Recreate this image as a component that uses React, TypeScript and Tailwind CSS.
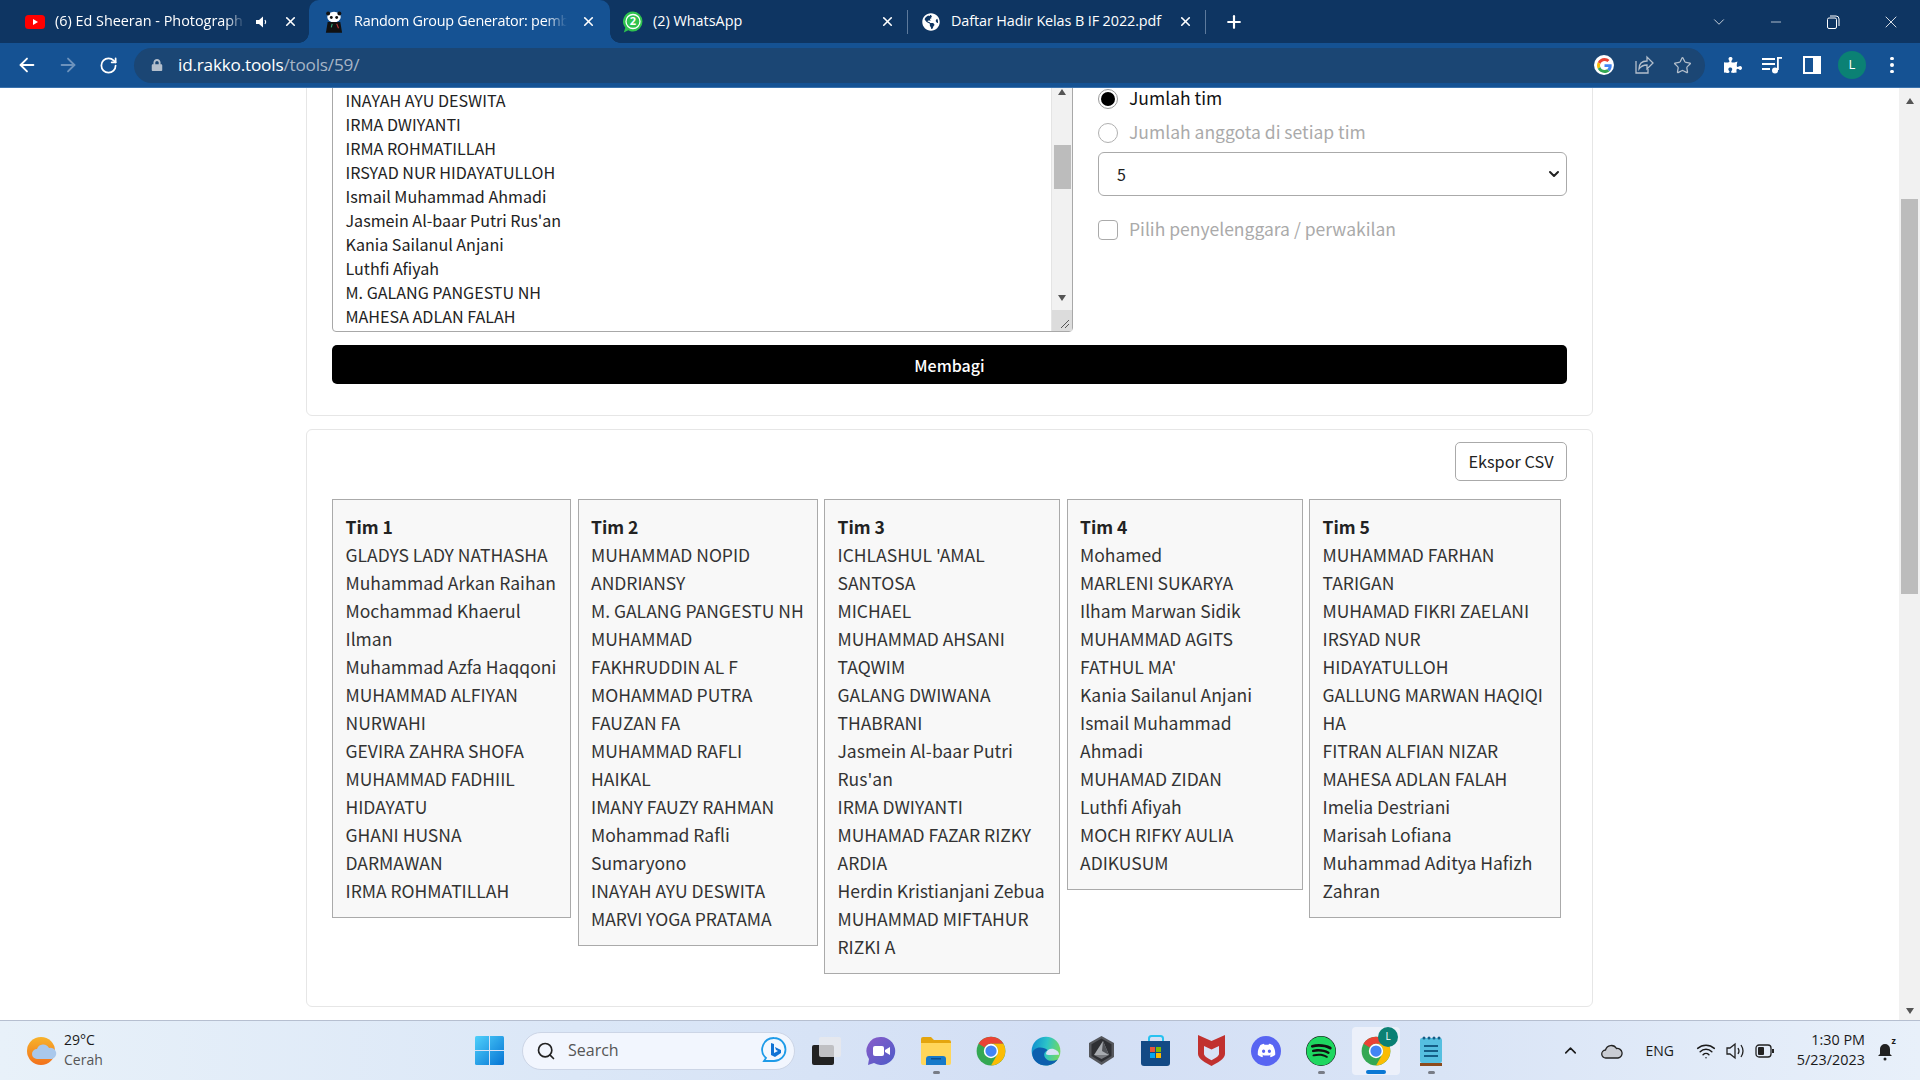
import React from "react";
import { ArrowLeft, ArrowRight, RotateCw, X, Plus, ChevronDown, Minus, Star, Search, ChevronUp, Wifi } from "lucide-react";
import { FaGlobeAmericas, FaPuzzlePiece, FaLock, FaDiscord, FaSpotify } from "react-icons/fa";

const listLines = ["INAYAH AYU DESWITA","IRMA DWIYANTI","IRMA ROHMATILLAH","IRSYAD NUR HIDAYATULLOH","Ismail Muhammad Ahmadi","Jasmein Al-baar Putri Rus'an","Kania Sailanul Anjani","Luthfi Afiyah","M. GALANG PANGESTU NH","MAHESA ADLAN FALAH"];

const teams = [
  { name: "Tim 1", cls: "w-[239px]", members: ["GLADYS LADY NATHASHA","Muhammad Arkan Raihan","Mochammad Khaerul\nIlman","Muhammad Azfa Haqqoni","MUHAMMAD ALFIYAN\nNURWAHI","GEVIRA ZAHRA SHOFA","MUHAMMAD FADHIIL\nHIDAYATU","GHANI HUSNA\nDARMAWAN","IRMA ROHMATILLAH"] },
  { name: "Tim 2", cls: "w-[240px]", members: ["MUHAMMAD NOPID\nANDRIANSY","M. GALANG PANGESTU NH","MUHAMMAD\nFAKHRUDDIN AL F","MOHAMMAD PUTRA\nFAUZAN FA","MUHAMMAD RAFLI\nHAIKAL","IMANY FAUZY RAHMAN","Mohammad Rafli\nSumaryono","INAYAH AYU DESWITA","MARVI YOGA PRATAMA"] },
  { name: "Tim 3", cls: "w-[236px]", members: ["ICHLASHUL 'AMAL\nSANTOSA","MICHAEL","MUHAMMAD AHSANI\nTAQWIM","GALANG DWIWANA\nTHABRANI","Jasmein Al-baar Putri\nRus'an","IRMA DWIYANTI","MUHAMAD FAZAR RIZKY\nARDIA","Herdin Kristianjani Zebua","MUHAMMAD MIFTAHUR\nRIZKI A"] },
  { name: "Tim 4", cls: "w-[236px]", members: ["Mohamed","MARLENI SUKARYA","Ilham Marwan Sidik","MUHAMMAD AGITS\nFATHUL MA'","Kania Sailanul Anjani","Ismail Muhammad\nAhmadi","MUHAMAD ZIDAN","Luthfi Afiyah","MOCH RIFKY AULIA\nADIKUSUM"] },
  { name: "Tim 5", cls: "w-[252px]", members: ["MUHAMMAD FARHAN\nTARIGAN","MUHAMAD FIKRI ZAELANI","IRSYAD NUR\nHIDAYATULLOH","GALLUNG MARWAN HAQIQI\nHA","FITRAN ALFIAN NIZAR","MAHESA ADLAN FALAH","Imelia Destriani","Marisah Lofiana","Muhammad Aditya Hafizh\nZahran"] },
];

function GoogleG({ size = 14 }: { size?: number }) {
  return (
    <svg width={size} height={size} viewBox="0 0 48 48">
      <path fill="#EA4335" d="M24 9.5c3.54 0 6.71 1.22 9.21 3.6l6.85-6.85C35.9 2.38 30.47 0 24 0 14.62 0 6.51 5.38 2.56 13.22l7.98 6.19C12.43 13.72 17.74 9.5 24 9.5z" />
      <path fill="#4285F4" d="M46.98 24.55c0-1.57-.15-3.09-.38-4.55H24v9.02h12.94c-.58 2.96-2.26 5.48-4.78 7.18l7.73 6c4.51-4.18 7.09-10.36 7.09-17.65z" />
      <path fill="#FBBC05" d="M10.53 28.59c-.48-1.45-.76-2.99-.76-4.59s.27-3.14.76-4.59l-7.98-6.19C.92 16.46 0 20.12 0 24c0 3.88.92 7.54 2.56 10.78l7.97-6.19z" />
      <path fill="#34A853" d="M24 48c6.48 0 11.93-2.13 15.89-5.81l-7.73-6c-2.15 1.45-4.92 2.3-8.16 2.3-6.26 0-11.57-4.22-13.47-9.91l-7.98 6.19C6.51 42.62 14.62 48 24 48z" />
    </svg>
  );
}

function ChromeIcon({ size = 30 }: { size?: number }) {
  return (
    <svg width={size} height={size} viewBox="0 0 48 48">
      <circle cx="24" cy="24" r="23" fill="#34a853" />
      <path fill="#ea4335" d="M4.1 12.5A23 23 0 0 1 43.9 12.5L24 12.5A11.5 11.5 0 0 0 14 18.2Z" />
      <path fill="#fbbc04" d="M43.9 12.5A23 23 0 0 1 24 47L34 29.7A11.5 11.5 0 0 0 24 12.5Z" />
      <circle cx="24" cy="24" r="11.5" fill="#fff" />
      <circle cx="24" cy="24" r="9" fill="#4285f4" />
    </svg>
  );
}

function EdgeIcon() {
  return (
    <svg width="30" height="30" viewBox="0 0 48 48">
      <defs>
        <linearGradient id="edgeA" x1="0" y1="0.3" x2="1" y2="0.5">
          <stop offset="0" stopColor="#0f8fd0" />
          <stop offset="0.5" stopColor="#2cc4c8" />
          <stop offset="1" stopColor="#74d95e" />
        </linearGradient>
      </defs>
      <circle cx="24" cy="24" r="23" fill="url(#edgeA)" />
      <path fill="#0c5fae" d="M2 27C2 40 13 47 24 47C32 47 39 43 43 37C36 41 27 41 23 35C19 29 22 24 27 23C20 17 6 16 2 27Z" />
      <path fill="#d8e2f6" d="M24 28C25 22 31 19 37 21C43 23 45 27 45 30L31 30.500C27 30.500 24 30.500 24 28Z" />
    </svg>
  );
}

function HexIcon() {
  return (
    <svg width="27" height="29" viewBox="0 0 27 29">
      <polygon points="13.5,0 26,7 26,21 13.5,29 1,21 1,7" fill="#55575c" />
      <polygon points="13.5,2.500 23.500,8.200 23.500,20 13.5,26 3.500,20 3.500,8.200" fill="#2e2f33" />
      <polygon points="15,5 21,19 6,19" fill="#a8abb0" />
      <polygon points="15,5 21,19 14,15" fill="#505257" />
      <polygon points="6,19 21,19 13.500,23" fill="#77797e" />
    </svg>
  );
}

function StoreIcon() {
  return (
    <svg width="30" height="32" viewBox="0 0 30 32">
      <path d="M8 6V3.500C8 2 9 1 10.500 1h9C21 1 22 2 22 3.500V6" fill="none" stroke="#28c2f0" strokeWidth="2" />
      <path d="M0 6h29v22a3 3 0 0 1-3 3H3a3 3 0 0 1-3-3z" fill="#134a85" />
      <rect x="9" y="12" width="5" height="5" fill="#e8553a" />
      <rect x="15" y="12" width="5" height="5" fill="#7fba00" />
      <rect x="9" y="18" width="5" height="5" fill="#05a6f0" />
      <rect x="15" y="18" width="5" height="5" fill="#ffb900" />
    </svg>
  );
}

function McAfee() {
  return (
    <svg width="27" height="31" viewBox="0 0 27 31">
      <path fill="#c1312f" d="M0 0l13.500 6L27 0v19c0 5-8 9-13.500 12C8 28 0 24 0 19z" />
      <path fill="#d8e2f6" d="M6 11l7.500 3.400L21 11v8c0 2-4 4.500-7.500 6.200C10 23.500 6 21 6 19z" />
    </svg>
  );
}

function TeamsIcon() {
  return (
    <svg width="30" height="30" viewBox="0 0 30 30">
      <defs>
        <linearGradient id="teamA" x1="0" y1="0" x2="1" y2="1">
          <stop offset="0" stopColor="#8a5cc9" />
          <stop offset="1" stopColor="#4c5bc8" />
        </linearGradient>
      </defs>
      <path fill="url(#teamA)" d="M15 1a14 14 0 1 1-7 26l-6 2 1-6A14 14 0 0 1 15 1z" />
      <rect x="7" y="10" width="11" height="10" rx="2" fill="#fff" />
      <path d="M19 14l5-3v8l-5-3z" fill="#fff" />
    </svg>
  );
}

function Explorer() {
  return (
    <svg width="30" height="28" viewBox="0 0 30 28">
      <path fill="#e4a50e" d="M0 2a2 2 0 0 1 2-2h8l3 3h15a2 2 0 0 1 2 2v6H0z" />
      <path fill="#ffd65a" d="M0 6h30v20a2 2 0 0 1-2 2H2a2 2 0 0 1-2-2z" />
      <path fill="#1679c9" d="M5 28v-6a3 3 0 0 1 3-3h14a3 3 0 0 1 3 3v6z" />
      <rect x="10" y="21" width="10" height="1.500" fill="#0b4f8f" />
    </svg>
  );
}

function Notepad() {
  return (
    <svg width="22" height="30" viewBox="0 0 22 30">
      <rect x="0" y="2" width="22" height="25" rx="2" fill="#55bfe0" />
      <rect x="0" y="27" width="22" height="3" fill="#8c4a1c" />
      <g fill="#145e86">
        <circle cx="4" cy="2" r="1.500" /><circle cx="9" cy="2" r="1.500" /><circle cx="14" cy="2" r="1.500" /><circle cx="19" cy="2" r="1.500" />
        <rect x="4" y="9" width="14" height="2" /><rect x="4" y="14" width="14" height="2" /><rect x="4" y="19" width="14" height="2" />
      </g>
    </svg>
  );
}

function Windows() {
  return (
    <svg width="29" height="29" viewBox="0 0 29 29">
      <defs>
        <linearGradient id="winA" x1="0" y1="0" x2="1" y2="1">
          <stop offset="0" stopColor="#4fd0fb" />
          <stop offset="1" stopColor="#0574d4" />
        </linearGradient>
      </defs>
      <rect width="29" height="29" rx="1.500" fill="url(#winA)" />
      <rect x="14" width="1" height="29" fill="#d8e2f6" />
      <rect y="14" width="29" height="1" fill="#d8e2f6" />
    </svg>
  );
}

function Bing() {
  return (
    <svg width="26" height="30" viewBox="0 0 26 30">
      <path d="M13 2a11.500 11.500 0 0 1 0 23H3l2-3A11.500 11.500 0 0 1 13 2z" fill="#f4f8fe" stroke="#1e9be8" strokeWidth="1.800" />
      <path d="M10 7l3 1v9l4-2-2-1-1-3 6 3v3l-6 4-4-2z" fill="#1173d4" />
    </svg>
  );
}

function Weather() {
  return (
    <svg width="30" height="28" viewBox="0 0 30 28">
      <defs>
        <linearGradient id="sunA" x1="0" y1="0" x2="0" y2="1">
          <stop offset="0" stopColor="#f7b32b" />
          <stop offset="1" stopColor="#f2711c" />
        </linearGradient>
      </defs>
      <circle cx="14" cy="14" r="14" fill="url(#sunA)" />
      <path d="M10 22a5 5 0 0 1 0-10 6.500 6.500 0 0 1 12-1 5.600 5.600 0 0 1 3 11z" fill="#a9c8ec" />
    </svg>
  );
}

function Panda() {
  return (
    <svg width="18" height="24" viewBox="0 0 20 24">
      <ellipse cx="10" cy="6.500" rx="7.500" ry="6" fill="#fff" />
      <circle cx="3.500" cy="2.500" r="2.200" fill="#111" />
      <circle cx="16" cy="2.500" r="2.200" fill="#111" />
      <circle cx="7" cy="7" r="1.600" fill="#111" />
      <circle cx="13" cy="7" r="1.600" fill="#111" />
      <path d="M3 12h14l2 12H1z" fill="#111" />
      <path d="M13 14l2 5" stroke="#b33" strokeWidth="1.200" />
      <path d="M8 14l-1 4" stroke="#3a7" strokeWidth="1.200" />
    </svg>
  );
}

function YouTube() {
  return (
    <svg width="20" height="14" viewBox="0 0 20 14">
      <rect width="20" height="14" rx="3.500" fill="#f00" />
      <path d="M8 4l5 3-5 3z" fill="#fff" />
    </svg>
  );
}

function Speaker({ cls }: { cls?: string }) {
  return (
    <svg width="14" height="14" viewBox="0 0 14 14" className={cls}>
      <path d="M1 5h3l4-3.500v11L4 9H1z" fill="#fff" />
      <path d="M10 5q1.500 2 0 4" stroke="#fff" strokeWidth="1.200" fill="none" />
    </svg>
  );
}

function Tab({ icon, title, extra, cls, active, fade, tcls }: { icon: React.ReactNode; title: string; extra?: React.ReactNode; cls: string; active?: boolean; fade?: boolean; tcls?: string }) {
  return (
    <div className={`relative flex h-[43px] items-center shrink-0 ${cls} ${active ? "bg-[#155293] rounded-t-[10px]" : ""}`}>
      {active && <div className="absolute bottom-0 -left-[10px] h-[10px] w-[10px] bg-[radial-gradient(circle_at_0_0,transparent_9.5px,#155293_10px)]" />}
      {active && <div className="absolute bottom-0 -right-[10px] h-[10px] w-[10px] bg-[radial-gradient(circle_at_100%_0,transparent_9.5px,#155293_10px)]" />}
      {icon}
      <span className={`min-w-0 flex-1 overflow-hidden whitespace-nowrap pb-[2px] text-[14.400px] text-white ${tcls ?? ""} ${fade ? "[mask-image:linear-gradient(90deg,#000_90%,transparent)]" : ""}`}>{title}</span>
      {extra}
      <X size={15} strokeWidth={2.6} className="ml-[14px] shrink-0 text-white" />
    </div>
  );
}

function TaskCell({ children, dot, active }: { children: React.ReactNode; dot?: boolean; active?: boolean }) {
  return (
    <div className="relative flex h-[60px] w-[55px] shrink-0 items-center justify-center">
      {active && <div className="absolute left-[3.500px] top-[6px] h-[48px] w-[48px] rounded-[4px] bg-[#ecf0fa]" />}
      <div className="relative flex items-center justify-center">{children}</div>
      {dot && <div className="absolute bottom-[7px] left-[24px] h-[3px] w-[7px] rounded-full bg-[#787c86]" />}
      {active && <div className="absolute bottom-[7px] left-[17px] h-[3.500px] w-[20px] rounded-full bg-[#0a78d4]" />}
    </div>
  );
}

export default function App() {
  return (
    <div className="flex h-[1080px] w-[1920px] flex-col overflow-hidden bg-white font-['Noto_Sans_CJK_JP',sans-serif] text-[#333]">
      {/* Tab strip */}
      <div className="flex h-[43px] shrink-0 items-center bg-[#0e3562] font-['Open_Sans',sans-serif]">
        <Tab cls="w-[309px] pl-[25px] pr-[11px]" fade icon={<span className="mr-[10px] flex"><YouTube /></span>} title="(6) Ed Sheeran - Photograph" extra={<Speaker cls="ml-[10px] shrink-0" />} />
        <Tab cls="w-[301px] pl-[16px] pr-[14px]" active fade tcls="tracking-[-0.25px]" icon={<span className="mr-[11px] flex"><Panda /></span>} title="Random Group Generator: pemb" />
        <Tab cls="w-[297px] pl-[13px] pr-[12px]" icon={<span className="relative mr-[10px] flex h-[24px] w-[20px] items-center justify-center"><svg width="20" height="24" viewBox="0 0 20 24"><path d="M10 1.500a9.500 10 0 0 1 0 20c-1.800 0-3.300-.5-4.700-1.300L.8 22.500l1.500-4.700A10 10 0 0 1 10 1.500z" fill="#2fc24f" /><circle cx="10" cy="11.500" r="7" fill="none" stroke="#fff" strokeWidth="1.300" /></svg><span className="absolute pb-[2px] text-[11px] font-bold leading-none text-white">2</span></span>} title="(2) WhatsApp" />
        <div className="h-[24px] w-px shrink-0 bg-[#5d7a9c]" />
        <Tab cls="w-[297px] pl-[14px] pr-[12px]" tcls="tracking-[-0.1px]" icon={<span className="mr-[11px] flex"><FaGlobeAmericas size={18} className="text-white" /></span>} title="Daftar Hadir Kelas B IF 2022.pdf" />
        <div className="h-[24px] w-px shrink-0 bg-[#5d7a9c]" />
        <Plus size={20} strokeWidth={2.6} className="ml-[18px] text-white" />
        <div className="ml-auto flex items-center text-white">
          <ChevronDown size={18} strokeWidth={1} className="mr-[40px]" />
          <Minus size={16} strokeWidth={1} className="mr-[42px]" />
          <svg width="14" height="14" viewBox="0 0 14 14" className="mr-[41px]"><rect x="1.500" y="3" width="9" height="10.500" rx="1.500" fill="none" stroke="#fff" /><path d="M4 1h6a3 3 0 0 1 3 3v7" fill="none" stroke="#fff" /></svg>
          <X size={20} strokeWidth={1} className="mr-[19px]" />
        </div>
      </div>
      {/* Toolbar */}
      <div className="flex h-[45px] shrink-0 items-center border-b border-[#3a72ad] bg-[#155293] font-['Open_Sans',sans-serif]">
        <ArrowLeft size={22} strokeWidth={2} className="ml-[16px] text-white" />
        <ArrowRight size={22} strokeWidth={2} className="ml-[19px] text-[#6d93bd]" />
        <RotateCw size={19} strokeWidth={2.2} className="ml-[20px] text-white" />
        <div className="ml-[16px] flex h-[35px] w-[1571px] items-center rounded-full bg-[#1b4674] pl-[17px]">
          <FaLock size={12} className="text-[#b4bfcc]" />
          <span className="ml-[15px] text-[17.200px] tracking-[-0.2px] text-white">id.rakko.tools<span className="text-[#a7b5c6]">/tools/59/</span></span>
          <div className="ml-auto flex items-center">
            <span className="flex h-[20px] w-[20px] items-center justify-center rounded-full bg-white"><GoogleG size={15} /></span>
            <svg width="20" height="20" viewBox="0 0 20 20" className="ml-[20px]" fill="none" stroke="#b4bfcc" strokeWidth="1.300"><path d="M2 6v12h12v-4" /><path d="M5 14c0-5 3-8 8-8V2l6 6-6 6v-4c-4 0-6 1-8 4z" /></svg>
            <Star size={19} strokeWidth={1.600} className="ml-[19px] mr-[13px] text-[#b4bfcc]" />
          </div>
        </div>
        <FaPuzzlePiece size={18} className="ml-[19px] text-white" />
        <svg width="20" height="18" viewBox="0 0 20 18" className="ml-[20px]" fill="#fff"><rect x="0" y="2" width="13" height="2" /><rect x="0" y="7" width="13" height="2" /><rect x="0" y="12" width="8" height="2" /><circle cx="13" cy="14.500" r="3" /><rect x="15" y="1" width="1.800" height="13" /><rect x="15" y="1" width="5" height="1.800" /></svg>
        <svg width="18" height="18" viewBox="0 0 18 18" className="ml-[21px]"><rect x="1" y="1" width="16" height="16" fill="none" stroke="#fff" strokeWidth="2" /><rect x="10" y="1" width="7" height="16" fill="#fff" /></svg>
        <div className="ml-[17px] flex h-[28px] w-[28px] items-center justify-center rounded-full bg-[#0b8174] text-[13px] text-white">L</div>
        <div className="ml-[24px] flex flex-col gap-[3px]">
          <span className="h-[3.500px] w-[3.500px] rounded-full bg-white" />
          <span className="h-[3.500px] w-[3.500px] rounded-full bg-white" />
          <span className="h-[3.500px] w-[3.500px] rounded-full bg-white" />
        </div>
      </div>
      {/* Page */}
      <div className="flex h-[932px] min-h-0 overflow-hidden">
        <div className="w-[1899px] shrink-0 pl-[306px]">
          <section className="-mt-[20px] w-[1287px] rounded-[6px] border border-[#e6e6e6] bg-white px-[25px] pb-[31px] pt-[7px]">
            <div className="flex">
              <div className="relative h-[256px] w-[741px] rounded-[4px] border border-[#a8a8a8] bg-white pl-[12.500px] pt-[11px]">
                {listLines.map((l) => (
                  <div key={l} className="h-[24px] text-[16.100px] leading-[24px] text-[#222]">{l}</div>
                ))}
                <div className="absolute bottom-0 right-0 top-0 flex w-[21px] flex-col items-center border-l border-[#e4e4e4] bg-[#f1f1f1]">
                  <div className="mt-[12px] h-0 w-0 border-x-[4px] border-b-[6px] border-x-transparent border-b-[#555]" />
                  <div className="mt-[50px] h-[44px] w-[17px] bg-[#bcbcbc]" />
                  <div className="mt-[106px] h-0 w-0 border-x-[4px] border-t-[6px] border-x-transparent border-t-[#555]" />
                  <div className="mt-auto flex h-[21px] w-full items-end justify-end bg-[#dcdcdc] pb-[2px] pr-[2px]">
                    <svg width="10" height="10" viewBox="0 0 10 10" stroke="#555" strokeWidth="1"><path d="M1 9L9 1M5 9L9 5" /></svg>
                  </div>
                </div>
              </div>
              <div className="ml-[25px] w-[469px] pt-[6px]">
                <div className="flex h-[34px] items-center">
                  <span className="flex h-[20px] w-[20px] items-center justify-center rounded-full border border-[#999] bg-white"><span className="h-[14px] w-[14px] rounded-full bg-black" /></span>
                  <span className="ml-[11px] pb-[2px] text-[17.500px] text-[#111]">Jumlah tim</span>
                </div>
                <div className="flex h-[34px] items-center">
                  <span className="h-[20px] w-[20px] rounded-full border border-[#b0b0b0] bg-white" />
                  <span className="ml-[11px] pb-[2px] text-[17.500px] text-[#aaa]">Jumlah anggota di setiap tim</span>
                </div>
                <div className="mt-[2px] flex h-[44px] items-center justify-between rounded-[6px] border border-[#aaa] bg-white pl-[18px] pr-[4px] text-[16px] text-[#222]">
                  <span>5</span>
                  <ChevronDown size={16} strokeWidth={3} className="text-[#222]" />
                </div>
                <div className="mt-[24px] flex h-[20px] items-center">
                  <span className="h-[20px] w-[20px] rounded-[4px] border border-[#aaa] bg-white" />
                  <span className="ml-[11px] pb-[2px] text-[17.500px] text-[#aaa]">Pilih penyelenggara / perwakilan</span>
                </div>
              </div>
            </div>
            <div className="mt-[13px] flex h-[39px] items-center justify-center rounded-[5px] bg-black text-[16px] font-medium text-white">Membagi</div>
          </section>
          <section className="mt-[13px] w-[1287px] rounded-[6px] border border-[#e6e6e6] bg-white px-[25px] pb-[32px] pt-[12px]">
            <div className="flex justify-end">
              <div className="flex h-[39px] w-[112px] items-center justify-center rounded-[5px] border border-[#aaa] bg-white pb-[1px] text-[16.300px] text-[#222]">Ekspor CSV</div>
            </div>
            <div className="mt-[18px] flex items-start gap-[6.500px]">
              {teams.map((t) => (
                <div key={t.name} className={`shrink-0 whitespace-pre-line border border-[#aaa] bg-[#f8f8f8] pb-[12px] pl-[12.500px] pr-[8px] pt-[13px] text-[17.500px] leading-[28px] ${t.cls}`}>
                  <div className="font-bold text-[#222]">{t.name}</div>
                  {t.members.map((m) => (
                    <div key={m}>{m}</div>
                  ))}
                </div>
              ))}
            </div>
          </section>
        </div>
        <div className="relative flex h-full w-[21px] flex-col items-center bg-[#f1f1f1]">
          <div className="mt-[10px] h-0 w-0 border-x-[4px] border-b-[6px] border-x-transparent border-b-[#555]" />
          <div className="mt-[95px] h-[395px] w-[17px] bg-[#bcbcbc]" />
          <div className="mb-[6px] mt-auto h-0 w-0 border-x-[4px] border-t-[6px] border-x-transparent border-t-[#555]" />
        </div>
      </div>
      {/* Taskbar */}
      <div className="flex h-[60px] shrink-0 items-center border-t border-[#b6bfd0] bg-[linear-gradient(90deg,#e8f1f9,#dbe7f7_30%,#d3dff5_55%,#d9e4f6_75%,#e8f0fa)] font-['Open_Sans',sans-serif]">
        <div className="ml-[27px] flex w-[448px] items-center">
          <Weather />
          <div className="ml-[7px] flex flex-col pb-[2px] text-[14px] leading-[20px]">
            <span className="text-[#1a1a1a]">29°C</span>
            <span className="text-[#555]">Cerah</span>
          </div>
        </div>
        <Windows />
        <div className="ml-[18px] flex h-[38px] w-[273px] items-center rounded-full border border-[#ccd5e6] bg-[#f2f6fe] pl-[13px] pr-[7px]">
          <Search size={20} strokeWidth={2} className="text-[#222]" />
          <span className="ml-[12px] pb-[2px] text-[16px] text-[#555]">Search</span>
          <span className="ml-auto flex"><Bing /></span>
        </div>
        <div className="ml-[3.500px] flex">
          <TaskCell>
            <div className="relative h-[28px] w-[29px]">
              <div className="absolute bottom-0 left-0 h-[20px] w-[22px] rounded-[2px] bg-[#222]" />
              <div className="absolute right-0 top-0 h-[20px] w-[22px] rounded-[2px] bg-[#e8e8ec] opacity-80" />
            </div>
          </TaskCell>
          <TaskCell><TeamsIcon /></TaskCell>
          <TaskCell dot><Explorer /></TaskCell>
          <TaskCell><ChromeIcon /></TaskCell>
          <TaskCell><EdgeIcon /></TaskCell>
          <TaskCell><HexIcon /></TaskCell>
          <TaskCell><StoreIcon /></TaskCell>
          <TaskCell><McAfee /></TaskCell>
          <TaskCell><span className="flex h-[30px] w-[30px] items-center justify-center rounded-full bg-[#5865f2]"><FaDiscord size={19} className="text-white" /></span></TaskCell>
          <TaskCell dot><FaSpotify size={30} className="rounded-full bg-[#111] text-[#1ed760]" /></TaskCell>
          <TaskCell active dot={false}>
            <ChromeIcon />
            <span className="absolute -right-[7px] -top-[9px] flex h-[20px] w-[20px] items-center justify-center rounded-full bg-[#0b8174] text-[10px] text-white">L</span>
          </TaskCell>
          <TaskCell dot><Notepad /></TaskCell>
        </div>
        <div className="flex flex-1 items-center pl-[102px] text-[#1a1a1a]">
          <ChevronUp size={19} strokeWidth={2} />
          <svg width="22" height="18" viewBox="0 0 22 18" className="ml-[21px]"><path d="M5 16a4 4 0 0 1-.5-8 6 6 0 0 1 11-1.500A4.500 4.500 0 0 1 17 16z" fill="#c9ccd3" stroke="#222" strokeWidth="1.300" /></svg>
          <span className="ml-[23px] text-[14px]">ENG</span>
          <Wifi size={20} strokeWidth={1.800} className="ml-[22px]" />
          <svg width="22" height="20" viewBox="0 0 22 20" className="ml-[9px]" fill="none" stroke="#222" strokeWidth="1.300"><path d="M2 7h3l5-4v14l-5-4H2z" /><path d="M13 7q2 3 0 6" /><path d="M16 4q4 6 0 12" /></svg>
          <svg width="20" height="14" viewBox="0 0 20 14" className="ml-[8px]"><rect x="1" y="1" width="15" height="12" rx="3" fill="none" stroke="#222" strokeWidth="1.300" /><rect x="3" y="3" width="6" height="8" rx="1" fill="#222" /><rect x="17" y="5" width="2" height="4" fill="#222" /></svg>
          <div className="ml-[19px] flex w-[71px] flex-col items-end pb-[2px] text-[14.400px] leading-[20px]">
            <span>1:30 PM</span>
            <span>5/23/2023</span>
          </div>
          <span className="relative ml-[12px] flex">
            <svg width="16" height="20" viewBox="0 0 16 20"><path d="M8 3a5 5 0 0 1 5 5v5l2 2H1l2-2V8a5 5 0 0 1 5-5z" fill="#222" /><circle cx="8" cy="18" r="1.500" fill="#222" /></svg>
            <span className="absolute -right-[3px] -top-[6px] text-[9px] font-bold leading-[12px]">z</span>
          </span>
        </div>
      </div>
    </div>
  );
}
